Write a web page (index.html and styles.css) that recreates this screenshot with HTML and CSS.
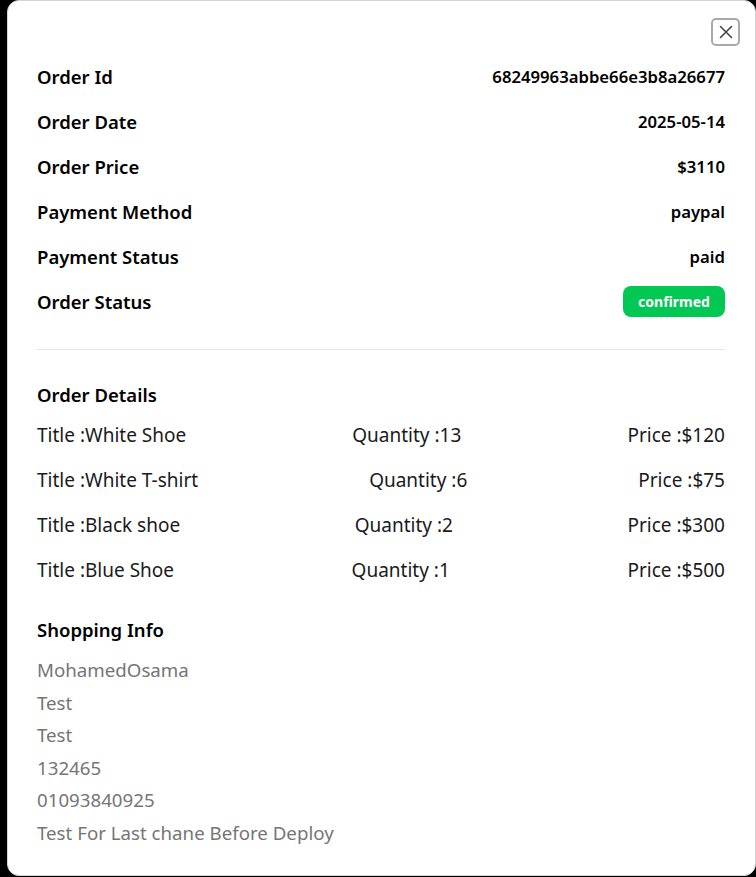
FILE: index.html
```html
<!DOCTYPE html>
<html>
<head>
<meta charset="utf-8">
<link rel="stylesheet" href="styles.css">
</head>
<body>
<div class="backdrop">
  <div class="modal">
    <div class="modal-header">
      <button class="close-btn" aria-label="Close">
        <svg width="14" height="14" viewBox="0 0 14 14"><path d="M1.5 1.5 L12.5 12.5 M12.5 1.5 L1.5 12.5" stroke="#444" stroke-width="1.6" fill="none" stroke-linecap="round"/></svg>
      </button>
    </div>
    <div class="summary">
      <div class="row"><span class="label">Order Id</span><span class="value">68249963abbe66e3b8a26677</span></div>
      <div class="row"><span class="label">Order Date</span><span class="value">2025-05-14</span></div>
      <div class="row"><span class="label">Order Price</span><span class="value">$3110</span></div>
      <div class="row"><span class="label">Payment Method</span><span class="value">paypal</span></div>
      <div class="row"><span class="label">Payment Status</span><span class="value">paid</span></div>
      <div class="row"><span class="label">Order Status</span><span class="badge">confirmed</span></div>
    </div>
    <hr class="divider">
    <h3 class="section-title">Order Details</h3>
    <div class="items">
      <div class="item"><span>Title :White Shoe</span><span>Quantity :13</span><span>Price :$120</span></div>
      <div class="item"><span>Title :White T-shirt</span><span>Quantity :6</span><span>Price :$75</span></div>
      <div class="item"><span>Title :Black shoe</span><span>Quantity :2</span><span>Price :$300</span></div>
      <div class="item"><span>Title :Blue Shoe</span><span>Quantity :1</span><span>Price :$500</span></div>
    </div>
    <h3 class="section-title shop-title">Shopping Info</h3>
    <div class="shipping">
      <p>MohamedOsama</p>
      <p>Test</p>
      <p>Test</p>
      <p>132465</p>
      <p>01093840925</p>
      <p>Test For Last chane Before Deploy</p>
    </div>
  </div>
</div>
</body>
</html>
```
FILE: styles.css
```css
* { box-sizing: border-box; }
html, body { margin: 0; padding: 0; }
body {
  background: #000;
  font-family: "Noto Sans", "Open Sans", sans-serif;
  color: #111;
  width: 756px;
  height: 877px;
  overflow: hidden;
}
.backdrop {
  padding-left: 7px;
}
.modal {
  width: 749px;
  height: 876px;
  background: #fff;
  border: 1px solid #d4d4d4;
  border-radius: 12px;
  padding: 0 30px 0 29px;
}
.modal-header {
  display: flex;
  justify-content: flex-end;
  padding-top: 17px;
  margin-right: -15px;
}
.close-btn {
  width: 29px;
  height: 28px;
  border: 2px solid #a9a9a9;
  border-radius: 5px;
  background: #fff;
  display: flex;
  align-items: center;
  justify-content: center;
  padding: 0;
}
.summary {
  margin-top: 8px;
}
.row {
  display: flex;
  justify-content: space-between;
  align-items: center;
  height: 45px;
}
.label {
  font-size: 18.5px;
  font-weight: 600;
  color: #000;
}
.value {
  font-size: 16.7px;
  font-weight: 600;
  color: #000;
}
.badge {
  background: #00c853;
  color: #fff;
  font-size: 14px;
  font-weight: 700;
  width: 102px;
  height: 31px;
  border-radius: 8px;
  display: flex;
  align-items: center;
  justify-content: center;
}
.divider {
  border: 0;
  border-top: 1px solid #e3e3e3;
  margin: 25px 0 0;
}
.section-title {
  font-size: 18.5px;
  font-weight: 600;
  color: #000;
  margin: 32px 0 0;
  line-height: 26px;
}
.items {
  margin-top: 4px;
}
.item {
  display: flex;
  justify-content: space-between;
  align-items: center;
  height: 45px;
  font-size: 19px;
  color: #1a1a1a;
}
.shop-title {
  margin-top: 25px;
}
.shipping {
  margin-top: 11px;
}
.shipping p {
  margin: 0;
  font-size: 18.7px;
  line-height: 32.6px;
  color: #757575;
}
```
